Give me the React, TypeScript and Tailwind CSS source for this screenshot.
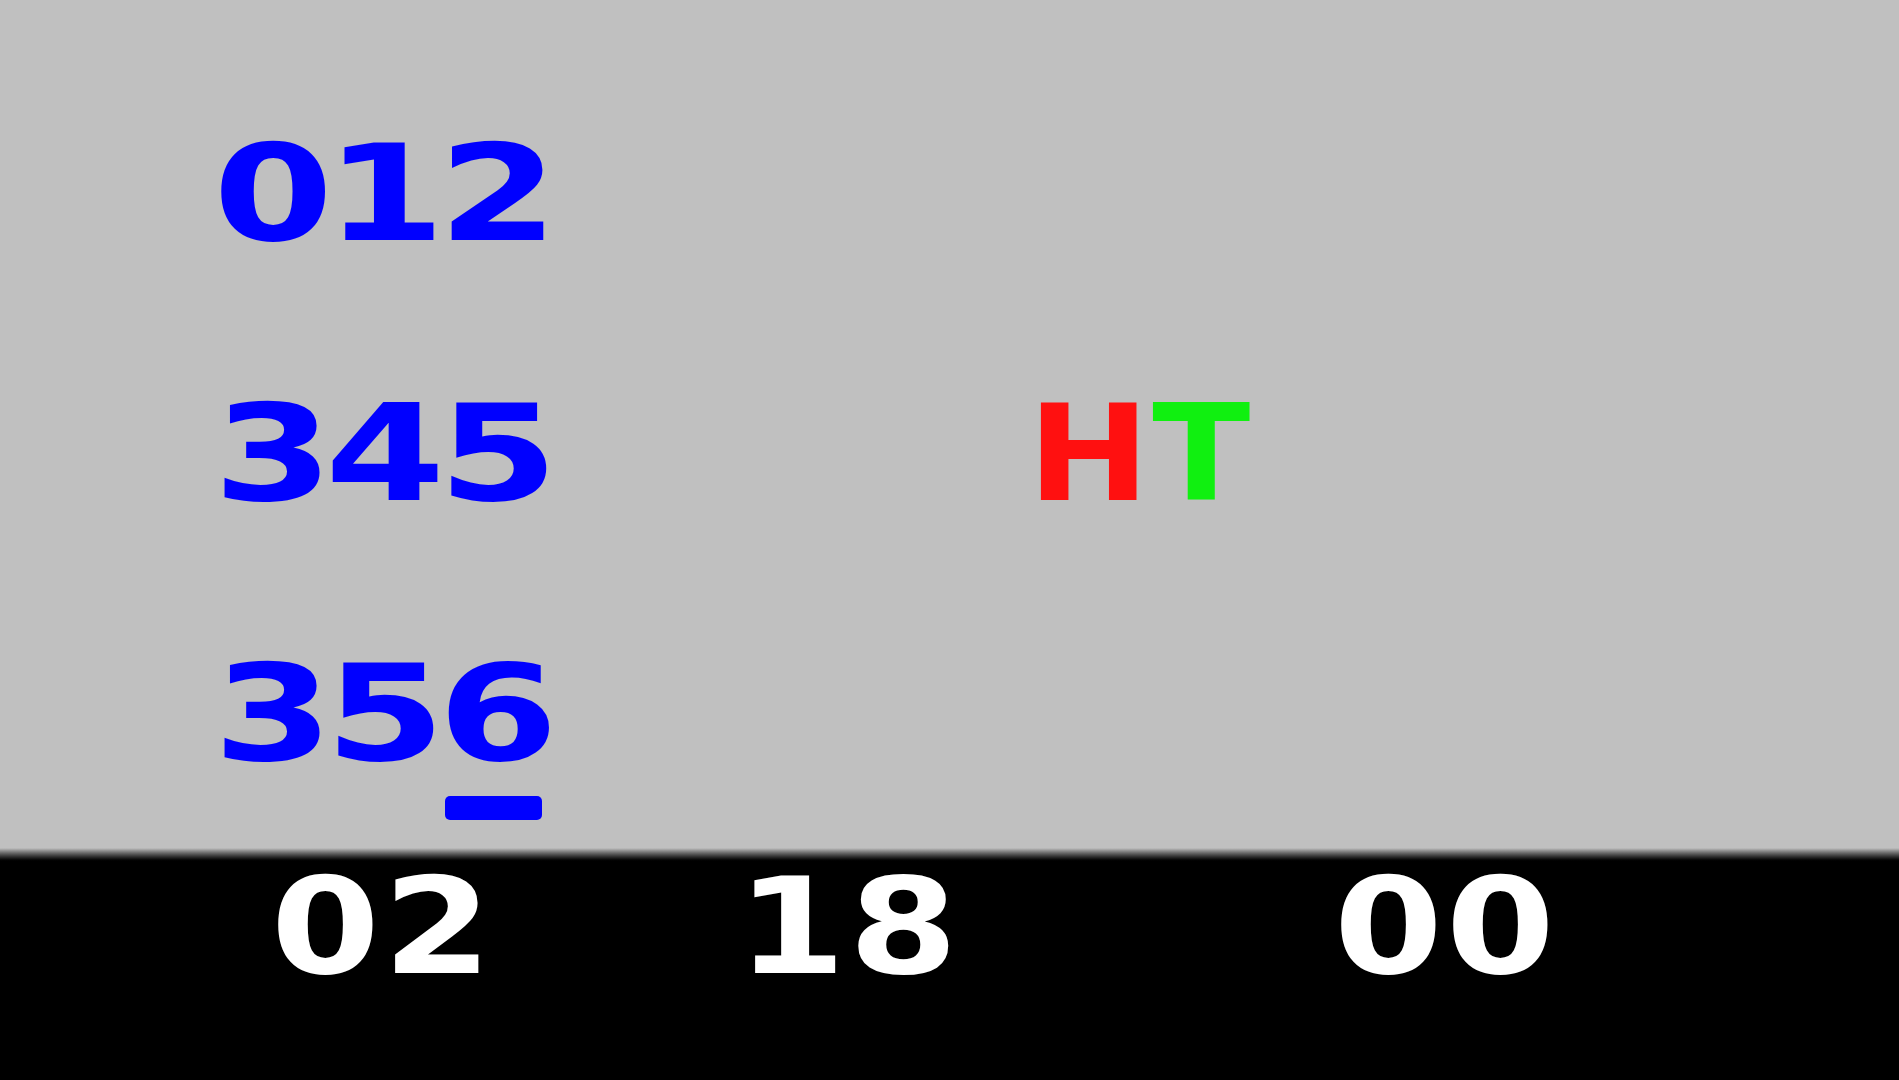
import React from "react";

// One character cell of the blocky display font
function Glyph({
  ch,
  className,
}: {
  ch: string;
  className: string;
}) {
  return (
    <div className="w-[112.5px] flex justify-center">
      <span className={`inline-block font-bold leading-none ${className}`}>{ch}</span>
    </div>
  );
}

const face = "font-['DejaVu_Sans',sans-serif]";

function BlueRow({ text, children }: { text: string; children?: React.ReactNode }) {
  return (
    <div className="h-[260px] flex items-center pl-[217px] relative">
      {text.split("").map((c, i) => (
        <Glyph key={i} ch={c} className={`${face} text-[133px] scale-x-[1.3] text-[#0000ff]`} />
      ))}
      {children}
    </div>
  );
}

export default function App() {
  return (
    <div className="w-[1899px] h-[1080px] flex flex-col bg-black overflow-hidden">
      {/* playfield */}
      <div className="h-[848px] bg-[#c0c0c0] pt-[64px]">
        <BlueRow text="012" />
        <BlueRow text="345">
          <div className="ml-[478px] flex">
            <Glyph ch="H" className={`${face} text-[133px] scale-x-[1.1] text-[#ff1010]`} />
            <Glyph ch="T" className={`${face} text-[133px] scale-x-[1.08] text-[#10f010]`} />
          </div>
        </BlueRow>
        <BlueRow text="356">
          {/* input cursor under the last digit */}
          <div className="absolute left-[445px] top-[212px] w-[97px] h-[24px] rounded-[5px] bg-[#0000ff]" />
        </BlueRow>
      </div>
      <div className="h-[14px] bg-gradient-to-b from-[#c0c0c0] to-black" />
      {/* status bar */}
      <div className="flex-1 bg-black">
        <div className="h-[130px] flex items-center">
          <div className="ml-[269px] flex">
            <Glyph ch="0" className={`${face} text-[133px] scale-x-[1.18] text-white`} />
            <Glyph ch="2" className={`${face} text-[133px] scale-x-[1.18] text-white`} />
          </div>
          <div className="ml-[241px] flex">
            <Glyph ch="1" className={`${face} text-[133px] scale-x-[1.18] text-white`} />
            <Glyph ch="8" className={`${face} text-[133px] scale-x-[1.18] text-white`} />
          </div>
          <div className="ml-[372px] flex">
            <Glyph ch="0" className={`${face} text-[133px] scale-x-[1.18] text-white`} />
            <Glyph ch="0" className={`${face} text-[133px] scale-x-[1.18] text-white`} />
          </div>
        </div>
      </div>
    </div>
  );
}
